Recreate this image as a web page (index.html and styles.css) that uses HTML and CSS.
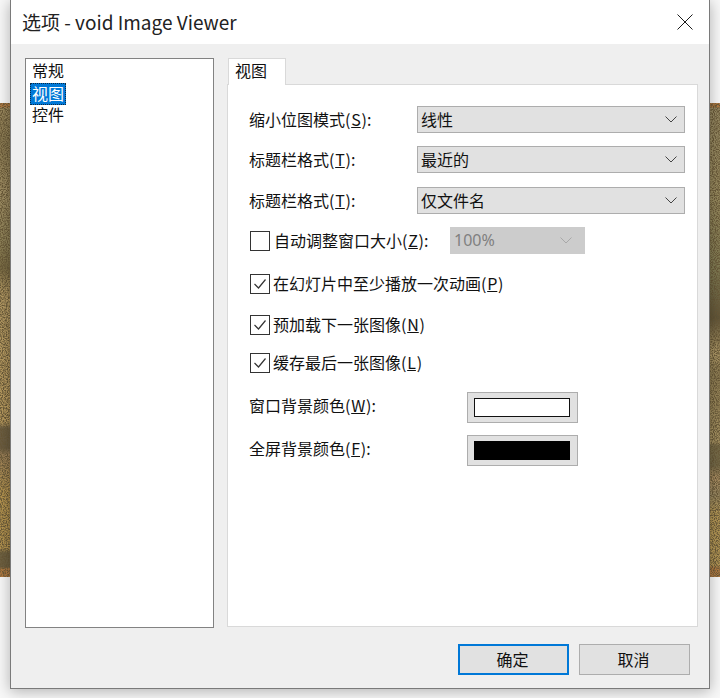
FILE: index.html
```html
<!DOCTYPE html>
<html lang="zh">
<head>
<meta charset="utf-8">
<title>选项 - void Image Viewer</title>
<link rel="stylesheet" href="styles.css">
</head>
<body>
<div class="desktop">
  <div class="strip strip-left"><svg class="grain" width="12" height="474"><filter id="grain-a" x="0" y="0" width="100%" height="100%"><feTurbulence type="fractalNoise" baseFrequency="0.8 0.9" numOctaves="2" seed="4"/><feColorMatrix type="matrix" values="0 0 0 0 0.14  0 0 0 0 0.1  0 0 0 0 0.04  3.2 0 0 0 -1.2"/></filter><rect width="12" height="474" filter="url(#grain-a)"/></svg></div>
  <div class="strip strip-right"><svg class="grain" width="10" height="474"><filter id="grain-b" x="0" y="0" width="100%" height="100%"><feTurbulence type="fractalNoise" baseFrequency="0.9 0.8" numOctaves="2" seed="9"/><feColorMatrix type="matrix" values="0 0 0 0 0.14  0 0 0 0 0.1  0 0 0 0 0.04  3.2 0 0 0 -1.2"/></filter><rect width="10" height="474" filter="url(#grain-b)"/></svg></div>
  <div class="dialog">
    <header class="titlebar">
      <span class="title">选项 - void Image Viewer</span>
      <svg class="close" width="16" height="16" viewBox="0 0 16 16"><path d="M0.5 0.5L15.5 15.5M15.5 0.5L0.5 15.5" stroke="#1a1a1a" stroke-width="1" fill="none"/></svg>
    </header>
    <div class="content">
      <div class="main">
        <ul class="list">
          <li>常规</li>
          <li><span class="selected">视图</span></li>
          <li>控件</li>
        </ul>
        <section class="tabs">
          <div class="tab">视图</div>
          <div class="panel">
            <div class="row row-a">
              <span class="label">缩小位图模式(<u>S</u>):</span>
              <div class="select"><span>线性</span><svg class="chev" width="12" height="7" viewBox="0 0 12 7"><path d="M0.5 0.5L6 6L11.5 0.5" fill="none" stroke="#444"/></svg></div>
            </div>
            <div class="row row-b">
              <span class="label">标题栏格式(<u>T</u>):</span>
              <div class="select"><span>最近的</span><svg class="chev" width="12" height="7" viewBox="0 0 12 7"><path d="M0.5 0.5L6 6L11.5 0.5" fill="none" stroke="#444"/></svg></div>
            </div>
            <div class="row row-c">
              <span class="label">标题栏格式(<u>T</u>):</span>
              <div class="select"><span>仅文件名</span><svg class="chev" width="12" height="7" viewBox="0 0 12 7"><path d="M0.5 0.5L6 6L11.5 0.5" fill="none" stroke="#444"/></svg></div>
            </div>
            <div class="row row-b">
              <span class="box"></span>
              <span class="check-text wide">自动调整窗口大小(<u>Z</u>):</span>
              <div class="select disabled"><span>100%</span><svg class="chev" width="12" height="7" viewBox="0 0 12 7"><path d="M0.5 0.5L6 6L11.5 0.5" fill="none" stroke="#a8a8a8"/></svg></div>
            </div>
            <div class="row check row-d">
              <span class="box"><svg width="18" height="18" viewBox="0 0 18 18"><path d="M3.5 9L7.5 13L14.5 4.5" fill="none" stroke="#333" stroke-width="1.2"/></svg></span>
              <span class="check-text">在幻灯片中至少播放一次动画(<u>P</u>)</span>
            </div>
            <div class="row check row-e">
              <span class="box"><svg width="18" height="18" viewBox="0 0 18 18"><path d="M3.5 9L7.5 13L14.5 4.5" fill="none" stroke="#333" stroke-width="1.2"/></svg></span>
              <span class="check-text">预加载下一张图像(<u>N</u>)</span>
            </div>
            <div class="row check row-f">
              <span class="box"><svg width="18" height="18" viewBox="0 0 18 18"><path d="M3.5 9L7.5 13L14.5 4.5" fill="none" stroke="#333" stroke-width="1.2"/></svg></span>
              <span class="check-text">缓存最后一张图像(<u>L</u>)</span>
            </div>
            <div class="row color row-g">
              <span class="label">窗口背景颜色(<u>W</u>):</span>
              <div class="swatch-btn"><div class="swatch white"></div></div>
            </div>
            <div class="row color row-h">
              <span class="label">全屏背景颜色(<u>F</u>):</span>
              <div class="swatch-btn"><div class="swatch black"></div></div>
            </div>
          </div>
        </section>
      </div>
      <footer class="buttons">
        <div class="btn primary">确定</div>
        <div class="btn">取消</div>
      </footer>
    </div>
  </div>
</div>
</body>
</html>
```
FILE: styles.css
```css
* { box-sizing: border-box; }
html, body { margin: 0; padding: 0; }
body {
  width: 720px;
  height: 698px;
  overflow: hidden;
  background: #f8f8f8;
  font-family: "Noto Sans CJK SC", "Noto Sans", sans-serif;
  font-size: 16px;
  color: #111;
}
u { margin: 0 0.75px; }
.desktop { position: relative; width: 720px; height: 698px; overflow: hidden; }
.strip {
  position: absolute;
  top: 103px;
  height: 474px;
}
.grain { display: block; }
.strip-left {
  left: 0;
  width: 12px;
  background-image:
    linear-gradient(180deg, #b27a42 0, #b27a42 4px, #9e8c60 5px, #8a7a52 40px, #a08e64 90px, #8e8258 140px, #7a6c44 165px, #b49a64 190px, #b89a5e 320px, #6e6044 325px, #6a5c42 345px, #9c8058 352px, #b5944f 390px, #b5944f 445px, #6f6242 450px, #6d6042 464px, #b27a42 466px);
}
.strip-right {
  right: 0;
  width: 10px;
  background-image:
    linear-gradient(180deg, #b27a42 0, #b27a42 4px, #958862 5px, #9a8c60 90px, #7f7a52 170px, #5f5438 215px, #b09a68 250px, #8f7e54 270px, #a69262 340px, #7a6e4a 342px, #736948 362px, #ac8e62 375px, #9a8a64 392px, #b59856 410px, #b59856 462px, #b27a42 465px);
}
.dialog {
  position: absolute;
  left: 10px;
  top: 0;
  width: 700px;
  height: 689px;
  display: flex;
  flex-direction: column;
  background: #efefef;
  border: 1px solid #7a7a7a;
  border-top: 0;
  box-shadow: 0 2px 14px rgba(0,0,0,.3);
}
.titlebar {
  height: 44px;
  flex: none;
  display: flex;
  align-items: center;
  justify-content: space-between;
  padding: 0 16px 0 11px;
  background: #fff;
}
.title { font-size: 19px; color: #222; padding-bottom: 2px; }
.close { margin-bottom: 1px; }
.content {
  flex: 1;
  display: flex;
  flex-direction: column;
  padding: 14px 11px 0 14px;
}
.main { display: flex; gap: 13px; }
.list {
  list-style: none;
  margin: 0;
  padding: 2px 0 0 5px;
  width: 189px;
  height: 570px;
  background: #fff;
  border: 1px solid #828282;
}
.list li { height: 22px; line-height: 18px; padding-left: 1px; }
.selected {
  display: inline-block;
  vertical-align: top;
  margin-left: -2px;
  height: 22px;
  line-height: 18px;
  padding: 0 1px;
  background: #0078d7;
  color: #fff;
  border: 1px dotted #0c2a44;
}
.tabs { width: 471px; display: flex; flex-direction: column; }
.tab {
  width: 58px;
  height: 27px;
  margin-left: 1px;
  margin-bottom: -1px;
  padding-left: 6px;
  line-height: 22px;
  background: #fff;
  border: 1px solid #d9d9d9;
  border-bottom: 0;
  position: relative;
  z-index: 1;
}
.panel {
  height: 543px;
  background: #fff;
  border: 1px solid #d9d9d9;
  padding: 21px 12px 0 22px;
}
.row { display: flex; align-items: center; height: 27px; }
.row-a { margin-top: 0; }
.row-b { margin-top: 13px; }
.row-c { margin-top: 14px; }
.row-d { margin-top: 20px; }
.row-e { margin-top: 21px; }
.row-f { margin-top: 18px; }
.row-g { margin-top: 19px; }
.row-h { margin-top: 12px; }
.row.check { height: 20px; }
.row.color { height: 31px; }
.label { width: 168px; margin-left: -1px; flex: none; padding-bottom: 2px; }
.color .label { padding-bottom: 5px; }
.select {
  flex: 1;
  height: 27px;
  display: flex;
  align-items: center;
  justify-content: space-between;
  padding: 0 7px 2px 3px;
  background: #e1e1e1;
  border: 1px solid #adadad;
  color: #111;
}
.chev { margin-top: 2px; }
.select.disabled {
  flex: none;
  width: 135px;
  color: #808080;
  background: #cccccc;
  border-color: #cccccc;
  font-family: "Noto Sans", sans-serif;
  padding-right: 12px;
}
.box {
  flex: none;
  width: 20px;
  height: 20px;
  background: #fff;
  border: 1px solid #333;
  display: flex;
}
.check-text { margin-left: 3px; padding-bottom: 2px; }
.check-text.wide { width: 176px; margin-left: 4px; flex: none; }
.swatch-btn {
  width: 111px;
  height: 31px;
  margin-left: 50px;
  padding: 5px 7px 5px 6px;
  background: #e1e1e1;
  border: 1px solid #adadad;
}
.swatch { height: 19px; }
.swatch.white { background: #fff; border: 1px solid #111; }
.swatch.black { background: #000; }
.buttons {
  display: flex;
  justify-content: flex-end;
  gap: 10px;
  margin-top: 16px;
  padding-right: 8px;
}
.btn {
  width: 111px;
  height: 31px;
  line-height: 29px;
  padding-right: 2px;
  text-align: center;
  background: #e1e1e1;
  border: 1px solid #adadad;
}
.btn.primary { border: 2px solid #0078d7; line-height: 27px; }
```
